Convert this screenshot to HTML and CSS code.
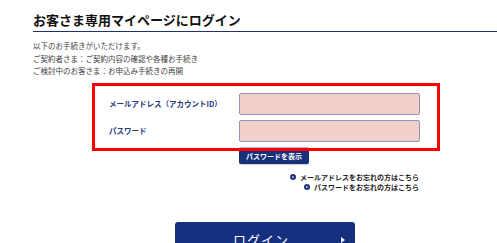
FILE: index.html
```html
<!DOCTYPE html>
<html lang="ja">
<head>
  <meta charset="UTF-8">
  <meta name="viewport" content="width=device-width, initial-scale=1.0">
  <title>お客さま専用マイページにログイン</title>
  <link rel="stylesheet" href="styles.css">
</head>
<body>

  <!-- 見出し -->
  <h1 class="titulo">お客さま専用マイページにログイン</h1>

  <div class="intro">
    <p>以下のお手続きがいただけます。</p>
    <p>ご契約者さま：ご契約内容の確認や各種お手続き</p>
    <p>ご検討中のお客さま：お申込み手続きの再開</p>
  </div>

  <!-- ログインフォーム -->
  <div class="form-area">
    <div class="destaque"></div>
    <div class="linha">
      <label class="rotulo" for="email">メールアドレス（アカウントID）</label>
      <input class="campo" type="text" id="email">
    </div>
    <div class="linha">
      <label class="rotulo" for="senha">パスワード</label>
      <input class="campo" type="password" id="senha">
    </div>
    <button class="btn-mostrar" type="button">パスワードを表示</button>
  </div>

  <ul class="links">
    <li><svg class="marca" viewBox="0 0 8 8"><circle cx="4" cy="4" r="4" fill="#1b3480"/><path d="M3.2 2.4 L5.4 4 L3.2 5.6 Z" fill="#fff"/></svg>メールアドレスをお忘れの方はこちら</li>
    <li><svg class="marca" viewBox="0 0 8 8"><circle cx="4" cy="4" r="4" fill="#1b3480"/><path d="M3.2 2.4 L5.4 4 L3.2 5.6 Z" fill="#fff"/></svg>パスワードをお忘れの方はこちら</li>
  </ul>

  <button class="btn-login" type="button">ログイン<span class="seta"></span></button>

</body>
</html>
```

FILE: styles.css
```css
/* Estilos gerais */
body {
  margin: 0;
  padding: 0;
  font-family: "Noto Sans CJK JP", "Noto Sans", sans-serif;
  background: #fff;
  color: #333;
  overflow: hidden;
}

/* Título */
.titulo {
  margin: 0 0 0 33px;
  padding: 11px 0 2px;
  font-size: 13px;
  line-height: 18px;
  font-weight: bold;
  color: #111;
  border-bottom: 1.5px solid #1c3272;
}

.intro {
  margin: 8px 0 0 33px;
  font-size: 7.5px;
  line-height: 12.5px;
  color: #444;
}

.intro p {
  margin: 0;
}

/* Formulário */
.form-area {
  position: relative;
  margin: 15px 0 0 109px;
}

.destaque {
  position: absolute;
  left: -17px;
  top: -10px;
  width: 348px;
  height: 68px;
  border: 3px solid #f00;
  box-sizing: border-box;
  z-index: 2;
}

.linha {
  display: flex;
  align-items: center;
  height: 22px;
  margin-bottom: 5px;
}

.rotulo {
  width: 130px;
  font-size: 7.5px;
  font-weight: bold;
  color: #283a7a;
}

.campo {
  width: 181px;
  height: 22px;
  margin: 0;
  padding: 0;
  box-sizing: border-box;
  background: #f2d0cc;
  border: 1px solid #9194c0;
  border-radius: 2px;
}

.btn-mostrar {
  display: block;
  margin: 0 0 0 130px;
  width: 70px;
  height: 17px;
  padding: 0;
  background: #17307c;
  color: #fff;
  border: none;
  border-top: 1px solid #b8bccc;
  border-radius: 2px;
  font-family: inherit;
  font-size: 7px;
  font-weight: bold;
  box-shadow: 0 1px 1px rgba(0,0,0,0.2);
}

/* Links */
.links {
  list-style: none;
  margin: 8px 0 0;
  padding: 0;
  width: 419px;
  text-align: right;
  font-size: 7px;
  line-height: 10px;
  font-weight: bold;
  color: #222;
}

.links li {
  display: flex;
  align-items: center;
  justify-content: flex-end;
}

.marca {
  width: 6px;
  height: 6px;
  margin-right: 4px;
}

/* Botão de login */
.btn-login {
  display: flex;
  align-items: center;
  justify-content: center;
  position: relative;
  margin: 30px 0 0 175px;
  width: 180px;
  height: 36px;
  padding: 0 8px 0 0;
  background: #14307f;
  color: #fff;
  border: none;
  border-radius: 3px;
  font-family: inherit;
  font-size: 13px;
  letter-spacing: 1px;
}

.seta {
  position: absolute;
  right: 10px;
  top: 15px;
  width: 0;
  height: 0;
  border-left: 4px solid #fff;
  border-top: 3px solid transparent;
  border-bottom: 3px solid transparent;
}
```
